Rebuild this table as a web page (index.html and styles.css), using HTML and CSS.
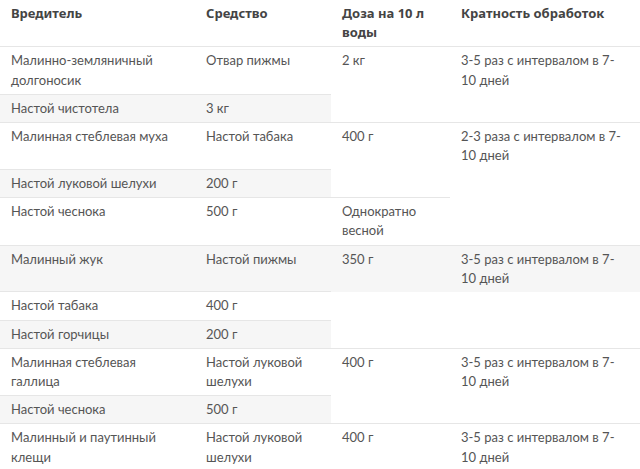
FILE: index.html
```html
<!DOCTYPE html>
<html lang="ru">
<head>
<meta charset="utf-8">
<link rel="stylesheet" href="styles.css">
</head>
<body>
<table class="pests">
  <colgroup>
    <col class="c1"><col class="c2"><col class="c3"><col class="c4">
  </colgroup>
  <thead>
    <tr>
      <th>Вредитель</th>
      <th>Средство</th>
      <th>Доза на 10 л воды</th>
      <th>Кратность обработок</th>
    </tr>
  </thead>
  <tbody>
    <tr>
      <td>Малинно-земляничный долгоносик</td>
      <td>Отвар пижмы</td>
      <td>2 кг</td>
      <td>3-5 раз с интервалом в 7-10 дней</td>
    </tr>
    <tr class="alt">
      <td>Настой чистотела</td>
      <td>3 кг</td>
    </tr>
    <tr>
      <td>Малинная стеблевая муха</td>
      <td>Настой табака</td>
      <td>400 г</td>
      <td>2-3 раза с интервалом в 7-10 дней</td>
    </tr>
    <tr class="alt">
      <td>Настой луковой шелухи</td>
      <td>200 г</td>
    </tr>
    <tr>
      <td>Настой чеснока</td>
      <td>500 г</td>
      <td>Однократно весной</td>
    </tr>
    <tr class="alt">
      <td>Малинный жук</td>
      <td>Настой пижмы</td>
      <td>350 г</td>
      <td>3-5 раз с интервалом в 7-10 дней</td>
    </tr>
    <tr>
      <td>Настой табака</td>
      <td>400 г</td>
    </tr>
    <tr class="alt">
      <td>Настой горчицы</td>
      <td>200 г</td>
    </tr>
    <tr>
      <td>Малинная стеблевая галлица</td>
      <td>Настой луковой шелухи</td>
      <td>400 г</td>
      <td>3-5 раз с интервалом в 7-10 дней</td>
    </tr>
    <tr class="alt">
      <td>Настой чеснока</td>
      <td>500 г</td>
    </tr>
    <tr>
      <td>Малинный и паутинный клещи</td>
      <td>Настой луковой шелухи</td>
      <td>400 г</td>
      <td>3-5 раз с интервалом в 7-10 дней</td>
    </tr>
  </tbody>
</table>
</body>
</html>
```
FILE: styles.css
```css
html, body {
  margin: 0;
  padding: 0;
  background: #fff;
}
body {
  font-family: "Lato", "Noto Sans", sans-serif;
  font-size: 13px;
  line-height: 19.2px;
  color: #555;
}
.pests {
  width: 640px;
  border-collapse: collapse;
  table-layout: fixed;
}
.c1 { width: 195px; }
.c2 { width: 136px; }
.c3 { width: 119px; }
.c4 { width: 190px; }
.pests th,
.pests td {
  padding: 4px 12px 4px 11px;
  text-align: left;
  vertical-align: top;
  border-top: 1px solid #e6e6e6;
}
.pests th {
  border-top: none;
  font-family: "Noto Sans", sans-serif;
  font-size: 13px;
  font-weight: bold;
  color: #444;
}
.pests tr.alt {
  background: #f6f6f6;
}
```
